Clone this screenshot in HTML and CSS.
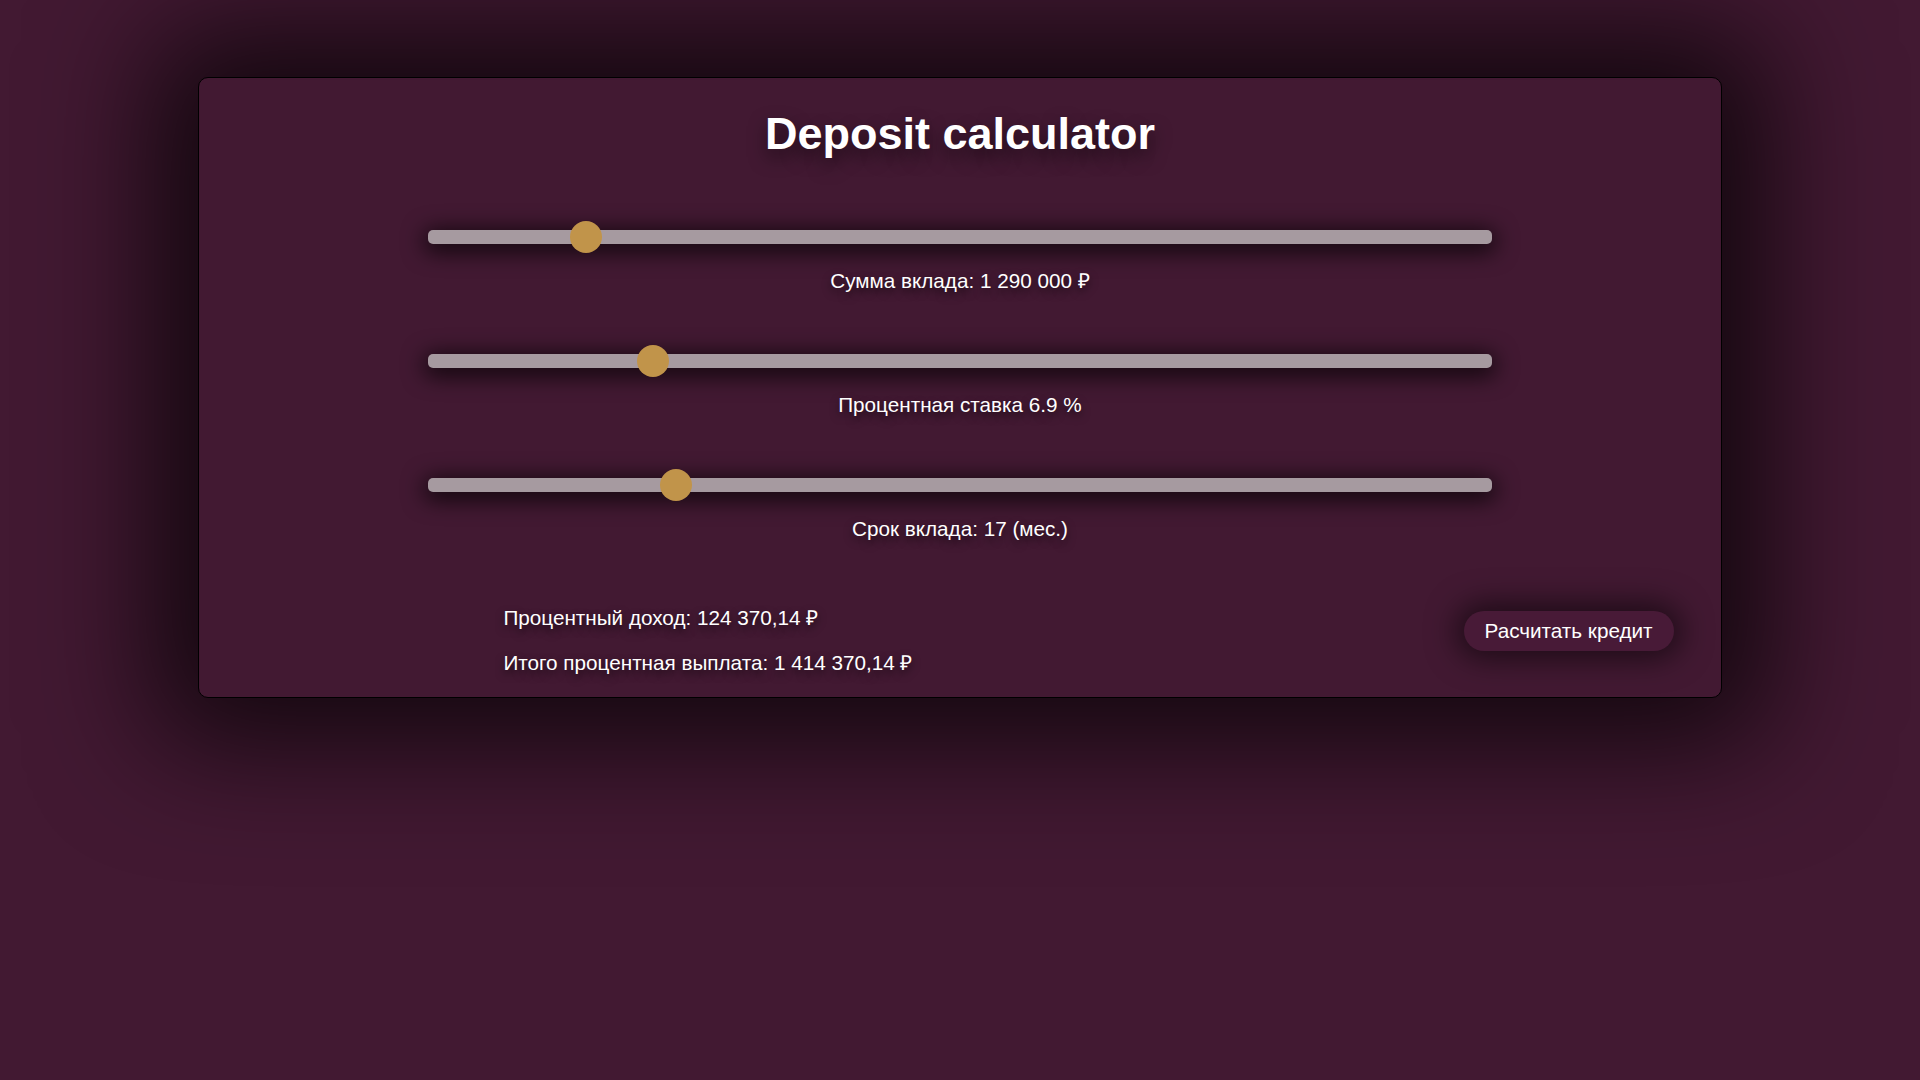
FILE: index.html
```html
<!DOCTYPE html>
<html lang="ru">
<head>
<meta charset="utf-8">
<title>Deposit calculator</title>
<link rel="stylesheet" href="styles.css">
</head>
<body>
<main class="card">
  <h1 class="title">Deposit calculator</h1>
  <section class="field">
    <input class="range" type="range" min="0" max="1034" value="143">
    <div class="label">Сумма вклада: 1 290 000 ₽</div>
  </section>
  <section class="field">
    <input class="range" type="range" min="0" max="1034" value="210">
    <div class="label">Процентная ставка 6.9 %</div>
  </section>
  <section class="field">
    <input class="range" type="range" min="0" max="1034" value="233">
    <div class="label">Срок вклада: 17 (мес.)</div>
  </section>
  <div class="results">
    <div class="totals">
      <p class="total">Процентный доход: 124 370,14 ₽</p>
      <p class="total">Итого процентная выплата: 1 414 370,14 ₽</p>
    </div>
    <button class="btn" type="button">Расчитать кредит</button>
  </div>
</main>
</body>
</html>
```
FILE: styles.css
```css
html, body {
  height: 100%;
}
body {
  margin: 0;
  padding: 77px 8px 0;
  box-sizing: border-box;
  background: #421932;
  font-family: "Liberation Sans", Arial, sans-serif;
  color: #fff;
}
.card {
  width: 80%;
  margin: 0 auto;
  box-sizing: border-box;
  background: #421932;
  border: 1px solid #000;
  border-radius: 10px;
  box-shadow: 0 0 120px 45px rgba(0, 0, 0, 0.72);
  padding: 30px 0 23px;
  display: flex;
  flex-direction: column;
}
.title {
  margin: 0;
  font-size: 45px;
  font-weight: bold;
  line-height: normal;
  text-align: center;
  text-shadow: 0 8px 18px rgba(0, 0, 0, 0.55);
}
.field {
  display: flex;
  flex-direction: column;
  margin-top: 70px;
}
.field + .field {
  margin-top: 62px;
}
.range {
  -webkit-appearance: none;
  appearance: none;
  display: block;
  width: 70%;
  margin: 0 auto;
  height: 14px;
  background: #a69aa0;
  border-radius: 5px;
  box-shadow: 0 4px 22px 4px rgba(0, 0, 0, 0.75);
  outline: none;
}
.range::-webkit-slider-thumb {
  -webkit-appearance: none;
  appearance: none;
  width: 32px;
  height: 32px;
  border-radius: 50%;
  background: #c1944a;
  border: none;
}
.label {
  margin-top: 25px;
  font-size: 20.7px;
  line-height: 23px;
  text-align: center;
  text-shadow: 0 4px 8px rgba(0, 0, 0, 0.6);
}
.results {
  display: flex;
  justify-content: space-between;
  align-items: flex-start;
  margin-top: 66px;
  padding: 0 47px 0 304px;
}
.totals {
  display: flex;
  flex-direction: column;
  gap: 22px;
}
.total {
  margin: 0;
  font-size: 20.7px;
  line-height: 23px;
  text-shadow: 0 4px 8px rgba(0, 0, 0, 0.6);
}
.btn {
  margin-top: 5px;
  height: 40px;
  padding: 0 21px;
  border: none;
  border-radius: 20px;
  background: #481a37;
  color: #fff;
  font-family: "Liberation Sans", Arial, sans-serif;
  font-size: 20.7px;
  box-shadow: 0 0 30px 8px rgba(0, 0, 0, 0.55);
  cursor: pointer;
}
```
